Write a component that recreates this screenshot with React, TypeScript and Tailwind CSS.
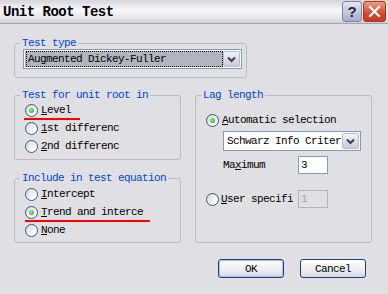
import type { ReactNode } from 'react';

const font = "font-['Liberation_Mono',monospace] text-[11px] tracking-[-0.6px] leading-[12px]";

function Radio({ checked }: { checked?: boolean }) {
  return (
    <span className="relative flex h-[13px] w-[13px] shrink-0 items-center justify-center rounded-full border border-[#2d5a8a] bg-[linear-gradient(135deg,#d6d6d2,#ffffff_80%)]">
      {checked && <span className="h-[5px] w-[5px] rounded-full bg-[radial-gradient(circle_at_40%_40%,#8ef08a,#21a121)]" />}
    </span>
  );
}

function Group({ title, className, children }: { title: string; className: string; children: ReactNode }) {
  return (
    <fieldset className={`rounded-[3px] border border-[#bdbbc4] ${className}`}>
      <legend className="ml-[5px] px-[2px] text-[#0046d5]">{title}</legend>
      {children}
    </fieldset>
  );
}

function DropArrow() {
  return (
    <div className="flex h-full w-[17px] items-center justify-center rounded-[2px] border border-[#b8bccb] bg-[linear-gradient(#f2f2f7,#c9cbd8)]">
      <svg width="9" height="7" viewBox="0 0 9 7">
        <path d="M1 1.5 L4.5 5 L8 1.5" fill="none" stroke="#3b3f55" strokeWidth="2" />
      </svg>
    </div>
  );
}

function Option({ checked, label, u }: { checked?: boolean; label: string; u: string }) {
  return (
    <div className="flex h-[18px] items-center gap-[3px]">
      <Radio checked={checked} />
      <span className="whitespace-nowrap">
        <u>{u}</u>
        {label}
      </span>
    </div>
  );
}

export default function App() {
  return (
    <div className={`h-[294px] w-[388px] overflow-hidden bg-[#e0dfe3] text-black ${font}`}>
      {/* title bar */}
      <div className="flex h-[24px] items-center justify-between border-b border-[#a3a3b6] bg-[linear-gradient(#d4d4dc,#f8f8fa_45%,#e4e4ea_80%,#cfcfd8)] pl-[3px] pr-[2px]">
        <span className="font-['Liberation_Mono',monospace] text-[14px] font-bold tracking-[-0.5px]">Unit Root Test</span>
        <div className="flex items-center gap-[1px]">
          <div className="flex h-[21px] w-[20px] items-center justify-center rounded-[3px] border border-[#7d84a6] bg-[linear-gradient(#e4e6f0,#a7adc6)] font-['Liberation_Sans',sans-serif] text-[15px] font-bold tracking-normal text-[#26283a]">
            ?
          </div>
          <div className="flex h-[21px] w-[23px] items-center justify-center rounded-[3px] border border-[#a03a28] bg-[linear-gradient(#f29a83,#d4482d_60%,#c83a22)]">
            <svg width="13" height="13" viewBox="0 0 13 13">
              <path d="M2 2 L11 11 M11 2 L2 11" stroke="#fff" strokeWidth="2.2" strokeLinecap="square" />
            </svg>
          </div>
        </div>
      </div>

      <div className="pl-[14px] pt-[13px]">
        {/* test type */}
        <Group title="Test type" className="h-[41px] w-[233px]">
          <div className="pl-[8px]">
            <div className="flex h-[20px] w-[219px] border border-[#7f9db9] bg-white p-[1px]">
              <div className="flex flex-1 items-center bg-[#b2b4bf] pl-[1px]">
                <div className="flex h-full flex-1 items-center border border-dotted border-black pl-[1px]">Augmented Dickey-Fuller</div>
              </div>
              <DropArrow />
            </div>
          </div>
        </Group>

        <div className="mt-[11px] flex gap-[14px]">
          <div className="flex flex-col gap-[12px]">
            <Group title="Test for unit root in" className="h-[71px] w-[167px]">
              <div className="relative pl-[10px]">
                <Option checked u="L" label="evel" />
                <Option u="1" label="st differenc" />
                <Option u="2" label="nd differenc" />
                <div className="absolute left-[9px] top-[17px] h-[2px] w-[56px] bg-[#ff0000]" />
              </div>
            </Group>
            <Group title="Include in test equation" className="h-[71px] w-[167px]">
              <div className="relative pl-[10px] pt-[1px]">
                <Option u="I" label="ntercept" />
                <Option checked u="T" label="rend and interce" />
                <Option u="N" label="one" />
                <div className="absolute left-[10px] top-[36px] h-[2px] w-[125px] bg-[#ff0000]" />
              </div>
            </Group>
          </div>

          <Group title="Lag length" className="h-[154px] w-[177px]">
            <div className="pl-[10px] pt-[10px]">
              <Option checked u="A" label="utomatic selection" />
              <div className="ml-[17px] mt-[2px] flex h-[20px] w-[138px] border border-[#7f9db9] bg-white p-[1px]">
                <div className="flex flex-1 items-center pl-[2px]">Schwarz Info Criter</div>
                <DropArrow />
              </div>
              <div className="ml-[17px] mt-[5px] flex h-[18px] items-center">
                <span className="w-[75px]">
                  Ma<u>x</u>imum
                </span>
                <div className="flex h-[18px] w-[30px] items-center border border-[#7f9db9] bg-white pl-[2px]">3</div>
              </div>
              <div className="mt-[16px] flex h-[18px] items-center">
                <div className="flex w-[92px] items-center gap-[2px]">
                  <Radio />
                  <span className="whitespace-nowrap">
                    <u>U</u>ser specifi
                  </span>
                </div>
                <div className="flex h-[18px] w-[30px] items-center border border-[#b5b3bd] pl-[2px] text-[#aca899]">1</div>
              </div>
            </div>
          </Group>
        </div>

        <div className="mt-[16px] flex justify-end gap-[16px] pr-[22px]">
          <button className="flex h-[19px] w-[66px] items-center justify-center rounded-[3px] border border-[#1d3f7a] bg-[linear-gradient(#ffffff,#e8e8ef_70%,#d6d6e0)] shadow-[inset_0_0_0_1px_#a9c3ee]">
            OK
          </button>
          <button className="flex h-[19px] w-[66px] items-center justify-center rounded-[3px] border border-[#1d3f7a] bg-[linear-gradient(#ffffff,#e8e8ef_70%,#d6d6e0)]">
            Cancel
          </button>
        </div>
      </div>
    </div>
  );
}
